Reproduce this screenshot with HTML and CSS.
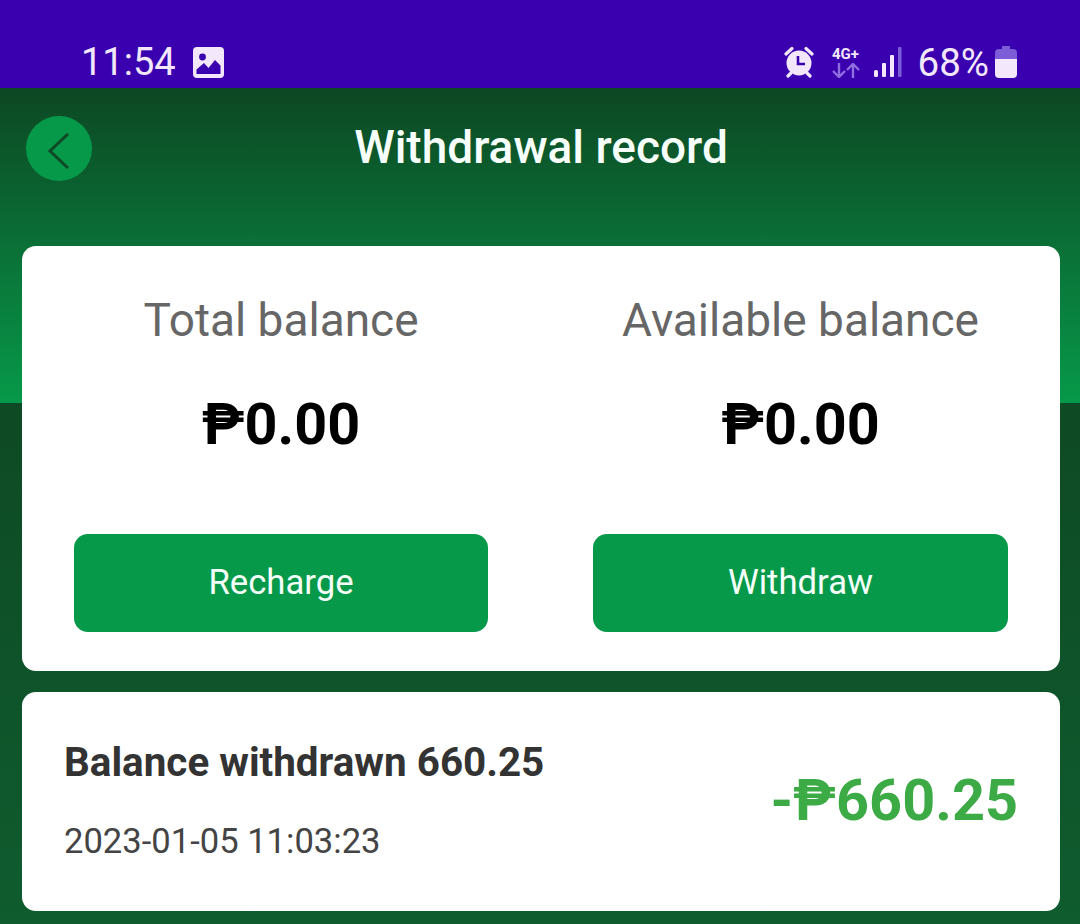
FILE: index.html
```html
<!DOCTYPE html>
<html lang="en">
<head>
    <meta charset="UTF-8">
    <meta name="viewport" content="width=device-width, initial-scale=1.0">
    <title>Withdrawal record</title>
    <link rel="stylesheet" href="styles.css">
</head>
<body>
    <div class="statusbar">
        <div class="status-left">
            <span class="clock">11:54</span>
            <svg class="icon-picture" width="31" height="31" viewBox="0 0 31 31">
                <rect width="31" height="31" rx="4" fill="#f3e8fb"/>
                <circle cx="9.5" cy="10" r="3.4" fill="#3a00b0"/>
                <path d="M3.5 27v-4.500l7.500-6.500 4.500 5 6.500-8 5.500 5.500v8.500z" fill="#3a00b0"/>
            </svg>
        </div>
        <div class="status-right">
            <svg class="icon-alarm" width="30" height="32" viewBox="0 0 30 32">
                <circle cx="15" cy="17" r="12.500" fill="#f3e8fb"/>
                <g fill="none" stroke="#f3e8fb" stroke-width="3.200" stroke-linecap="round">
                    <path d="M2 8l6-5.500M28 8l-6-5.500M7 27l-3 3M23 27l3 3"/>
                </g>
                <path d="M14 10v8h7" fill="none" stroke="#3a00b0" stroke-width="2.600"/>
            </svg>
            <div class="network">
                <span class="network-label">4G+</span>
                <svg width="30" height="15" viewBox="0 0 30 15" fill="none" stroke="#8f6fe0" stroke-width="2.400">
                    <path d="M8 0v13M2 8l6 6 6-6M22 15V2M16 7l6-6 6 6"/>
                </svg>
            </div>
            <svg class="icon-signal" width="29" height="30" viewBox="0 0 29 30">
                <rect x="1" y="23" width="4" height="7" rx="1.500" fill="#f3e8fb"/>
                <rect x="9" y="16" width="4" height="14" rx="1" fill="#f3e8fb"/>
                <rect x="17" y="8" width="4" height="22" rx="1" fill="#f3e8fb"/>
                <rect x="25" y="0" width="3.500" height="30" rx="1" fill="#7d5cd8"/>
            </svg>
            <span class="percent">68%</span>
            <svg class="icon-battery" width="22" height="32" viewBox="0 0 22 32">
                <path d="M7 0h8v3h3a4 4 0 0 1 4 4v8H0V7a4 4 0 0 1 4-4h3z" fill="#7d5cd8"/>
                <path d="M0 13h22v15a4 4 0 0 1-4 4H4a4 4 0 0 1-4-4z" fill="#f3e8fb"/>
            </svg>
        </div>
    </div>

    <div class="page">
        <div class="header">
            <a class="back" href="#">
                <svg width="26" height="36" viewBox="0 0 26 36" fill="none" stroke="#0e4a25" stroke-width="3">
                    <path d="M22 1L4 18l18 17"/>
                </svg>
            </a>
            <h1 class="title">Withdrawal record</h1>
        </div>

        <div class="card balance-card">
            <div class="balance-col">
                <div class="balance-label">Total balance</div>
                <div class="balance-value">₱0.00</div>
                <button class="action">Recharge</button>
            </div>
            <div class="balance-col">
                <div class="balance-label">Available balance</div>
                <div class="balance-value">₱0.00</div>
                <button class="action">Withdraw</button>
            </div>
        </div>

        <div class="card record">
            <div class="record-info">
                <div class="record-name">Balance withdrawn 660.25</div>
                <div class="record-date">2023-01-05 11:03:23</div>
            </div>
            <div class="record-amount">-₱660.25</div>
        </div>
    </div>
</body>
</html>
```

FILE: styles.css
```css
html, body {
    height: 100%;
}
body {
    font-family: Roboto, "DejaVu Sans", sans-serif;
    margin: 0;
    height: 924px;
    overflow: hidden;
    display: flex;
    flex-direction: column;
}
.statusbar {
    height: 88px;
    box-sizing: border-box;
    background: #3a00b0;
    color: #f3e8fb;
    display: flex;
    justify-content: space-between;
    align-items: center;
    padding: 36px 63px 0 81px;
}
.status-left, .status-right {
    display: flex;
    align-items: center;
}
.clock {
    font-size: 38px;
    margin-right: 17px;
}
.status-right .icon-alarm {
    margin-right: 17px;
}
.network {
    display: flex;
    flex-direction: column;
    align-items: center;
    margin-right: 12px;
}
.network-label {
    font-size: 15px;
    font-weight: 700;
    line-height: 17px;
}
.icon-signal {
    margin-right: 16px;
}
.percent {
    font-size: 38.500px;
    margin-right: 6px;
}
.page {
    flex: 1;
    padding: 0 20px 0 22px;
    background:
        linear-gradient(#0d4723, #07994a) top / 100% 315px no-repeat,
        linear-gradient(#0e4a24 315px, #0f5c2f);
}
.header {
    height: 158px;
    position: relative;
    display: flex;
    justify-content: center;
    align-items: flex-start;
}
.back {
    position: absolute;
    left: 4px;
    top: 28px;
    width: 66px;
    height: 65px;
    border-radius: 50%;
    background: #07994a;
    display: flex;
    align-items: center;
    justify-content: center;
}
.back svg {
    margin-top: 4px;
}
.title {
    margin: 31px 0 0;
    font-size: 46px;
    font-weight: 500;
    line-height: 56px;
    color: #f6fffa;
}
.card {
    background: #fff;
    border-radius: 14px;
}
.balance-card {
    height: 425px;
    box-sizing: border-box;
    padding: 44px 52px 0;
    display: grid;
    grid-template-columns: 414px 415px;
    justify-content: space-between;
    text-align: center;
}
.balance-label {
    font-size: 46px;
    line-height: 60px;
    color: #666;
}
.balance-value {
    margin-top: 42px;
    font-size: 57.500px;
    font-weight: 700;
    line-height: 66px;
    color: #000;
}
.action {
    display: block;
    width: 100%;
    height: 98px;
    margin-top: 76px;
    padding-bottom: 4px;
    border: none;
    border-radius: 14px;
    background: #07994a;
    color: #f3fff8;
    font-family: inherit;
    font-size: 34.700px;
}
.record {
    height: 219px;
    margin-top: 21px;
    box-sizing: border-box;
    padding: 0 42px 4px;
    display: flex;
    justify-content: space-between;
    align-items: center;
}
.record-name {
    font-size: 40.400px;
    font-weight: 700;
    line-height: 48px;
    color: #333;
}
.record-date {
    margin-top: 34px;
    font-size: 34.600px;
    line-height: 40px;
    color: #444;
}
.record-amount {
    margin-top: 2px;
    font-size: 57.600px;
    font-weight: 700;
    color: #3cab45;
}
```
